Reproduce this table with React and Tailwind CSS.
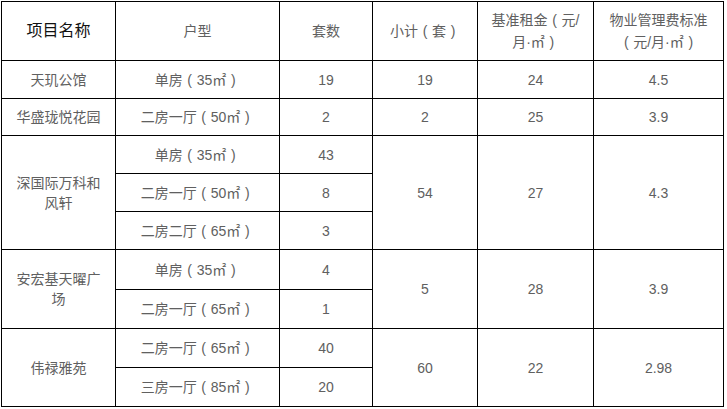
import React from "react";

const cell = "border border-black text-center align-middle px-3 text-[14px] leading-[20px] text-[#606060]";

function T({ s }) {
  const parts = s.split(/([（）])/);
  return (
    <>
      {parts.map((p, i) =>
        p === "（" || p === "）" ? (
          <span key={i} className="inline-block w-[14px] text-center">{p === "（" ? "(" : ")"}</span>
        ) : (
          <React.Fragment key={i}>{p}</React.Fragment>
        )
      )}
    </>
  );
}

function C({ s, rs, extra = "" }) {
  return (
    <td className={cell + extra} rowSpan={rs}>
      <T s={s} />
    </td>
  );
}

export default function App() {
  return (
    <div className="bg-white w-[727px] h-[409px] pt-px pl-px" style={{ fontFamily: '"Liberation Sans", "Noto Sans CJK SC", sans-serif' }}>
      <table className="border-collapse table-fixed w-[722px]">
        <colgroup>
          <col className="w-[114px]" />
          <col className="w-[164px]" />
          <col className="w-[93px]" />
          <col className="w-[105px]" />
          <col className="w-[116px]" />
          <col className="w-[130px]" />
        </colgroup>
        <tbody>
          <tr className="h-[59px]">
            <td className="border border-black text-center align-middle px-2 text-[16px] text-[#111]">项目名称</td>
            <C s="户型" />
            <C s="套数" />
            <C s="小计（套）" />
            <C s="基准租金（元/月·㎡）" extra=" leading-[22px]" />
            <C s="物业管理费标准（元/月·㎡）" extra=" leading-[22px]" />
          </tr>
          <tr className="h-[38px]">
            <C s="天玑公馆" />
            <C s="单房（35㎡）" />
            <C s="19" />
            <C s="19" />
            <C s="24" />
            <C s="4.5" />
          </tr>
          <tr className="h-[37px]">
            <C s="华盛珑悦花园" />
            <C s="二房一厅（50㎡）" />
            <C s="2" />
            <C s="2" />
            <C s="25" />
            <C s="3.9" />
          </tr>
          <tr className="h-[38px]">
            <C s="深国际万科和风轩" rs={3} />
            <C s="单房（35㎡）" />
            <C s="43" />
            <C s="54" rs={3} />
            <C s="27" rs={3} />
            <C s="4.3" rs={3} />
          </tr>
          <tr className="h-[38px]">
            <C s="二房一厅（50㎡）" />
            <C s="8" />
          </tr>
          <tr className="h-[38px]">
            <C s="二房二厅（65㎡）" />
            <C s="3" />
          </tr>
          <tr className="h-[40px]">
            <C s="安宏基天曜广场" rs={2} />
            <C s="单房（35㎡）" />
            <C s="4" />
            <C s="5" rs={2} />
            <C s="28" rs={2} />
            <C s="3.9" rs={2} />
          </tr>
          <tr className="h-[39px]">
            <C s="二房一厅（65㎡）" />
            <C s="1" />
          </tr>
          <tr className="h-[39px]">
            <C s="伟禄雅苑" rs={2} />
            <C s="二房一厅（65㎡）" />
            <C s="40" />
            <C s="60" rs={2} />
            <C s="22" rs={2} />
            <C s="2.98" rs={2} />
          </tr>
          <tr className="h-[39px]">
            <C s="三房一厅（85㎡）" />
            <C s="20" />
          </tr>
        </tbody>
      </table>
    </div>
  );
}
